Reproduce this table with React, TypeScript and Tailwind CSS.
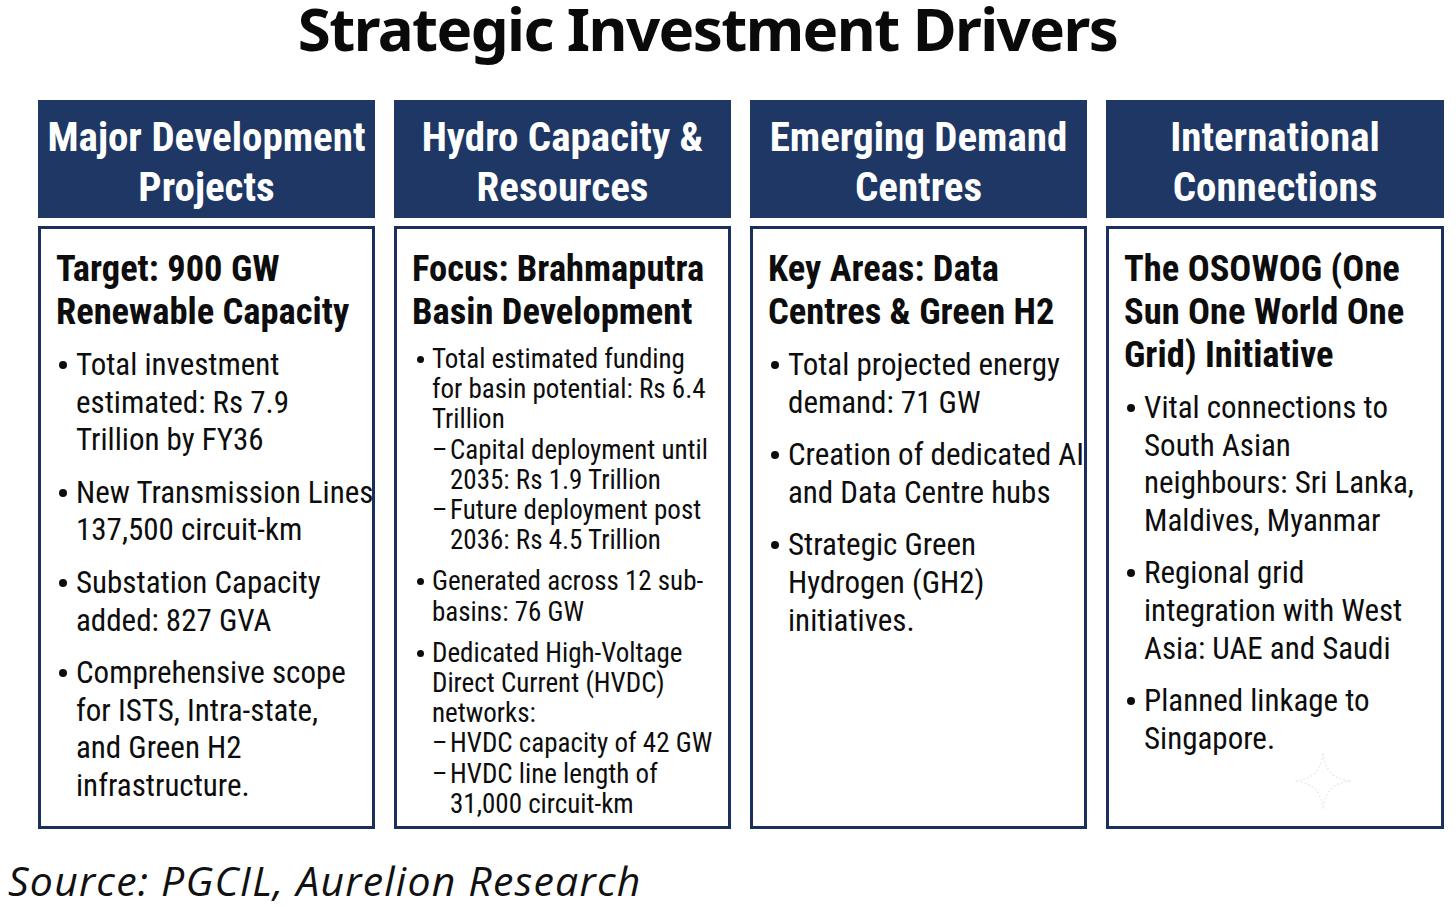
import React from "react";

type Item = { text: string[]; subs?: string[][] };
type Col = { header: string[]; title: string[]; size: "lg" | "sm"; items: Item[]; star?: boolean };

const cols: Col[] = [
  {
    header: ["Major Development", "Projects"],
    title: ["Target: 900 GW", "Renewable Capacity"],
    size: "lg",
    items: [
      { text: ["Total investment", "estimated: Rs 7.9", "Trillion by FY36"] },
      { text: ["New Transmission Lines", "137,500 circuit-km"] },
      { text: ["Substation Capacity", "added: 827 GVA"] },
      { text: ["Comprehensive scope", "for ISTS, Intra-state,", "and Green H2", "infrastructure."] },
    ],
  },
  {
    header: ["Hydro Capacity &", "Resources"],
    title: ["Focus: Brahmaputra", "Basin Development"],
    size: "sm",
    items: [
      {
        text: ["Total estimated funding", "for basin potential: Rs 6.4", "Trillion"],
        subs: [
          ["Capital deployment until", "2035: Rs 1.9 Trillion"],
          ["Future deployment post", "2036: Rs 4.5 Trillion"],
        ],
      },
      { text: ["Generated across 12 sub-", "basins: 76 GW"] },
      {
        text: ["Dedicated High-Voltage", "Direct Current (HVDC)", "networks:"],
        subs: [["HVDC capacity of 42 GW"], ["HVDC line length of", "31,000 circuit-km"]],
      },
    ],
  },
  {
    header: ["Emerging Demand", "Centres"],
    title: ["Key Areas: Data", "Centres & Green H2"],
    size: "lg",
    items: [
      { text: ["Total projected energy", "demand: 71 GW"] },
      { text: ["Creation of dedicated AI", "and Data Centre hubs"] },
      { text: ["Strategic Green", "Hydrogen (GH2)", "initiatives."] },
    ],
  },
  {
    header: ["International", "Connections"],
    title: ["The OSOWOG (One", "Sun One World One", "Grid) Initiative"],
    size: "lg",
    star: true,
    items: [
      { text: ["Vital connections to", "South Asian", "neighbours: Sri Lanka,", "Maldives, Myanmar"] },
      { text: ["Regional grid", "integration with West", "Asia: UAE and Saudi"] },
      { text: ["Planned linkage to", "Singapore."] },
    ],
  },
];

function Lines({ lines }: { lines: string[] }) {
  return (
    <>
      {lines.map((l, i) => (
        <div key={i} className="whitespace-nowrap">
          {l}
        </div>
      ))}
    </>
  );
}

function Column({ col }: { col: Col }) {
  const lg = col.size === "lg";
  return (
    <div className="flex flex-col">
      <div className="h-[118px] bg-[#1e3765] flex flex-col items-center justify-center pt-[6px] text-white font-bold text-[41px] leading-[50px]">
        {col.header.map((h, i) => (
          <div key={i} className="whitespace-nowrap">
            {h}
          </div>
        ))}
      </div>
      <div className="relative mt-[8px] h-[603px] border-[3px] border-[#1b2f5c] bg-white pl-[15px] pt-[18px] text-[#0d0d0d]">
        <div className="font-bold text-[36.5px] leading-[43px]">
          <Lines lines={col.title} />
        </div>
        <div
          className={
            lg
              ? "mt-[13px] flex flex-col gap-[15px] text-[31px] leading-[37.6px]"
              : "mt-[11px] flex flex-col gap-[11px] text-[27px] leading-[30.2px]"
          }
        >
          {col.items.map((it, i) => (
            <div key={i} className="flex flex-col">
              <div className="flex">
                <div className={lg ? "w-[20px] shrink-0 pl-[3px] flex items-center h-[38px]" : "w-[20px] shrink-0 pl-[5px] flex items-center h-[31px]"}>
                  <span className={lg ? "block w-[8px] h-[8px] rounded-full bg-[#0d0d0d]" : "block w-[7px] h-[7px] rounded-full bg-[#0d0d0d]"} />
                </div>
                <div>
                  <Lines lines={it.text} />
                </div>
              </div>
              {it.subs?.map((s, j) => (
                <div key={j} className="flex pl-[20px]">
                  <div className="w-[18px] shrink-0">–</div>
                  <div>
                    <Lines lines={s} />
                  </div>
                </div>
              ))}
            </div>
          ))}
        </div>
        {col.star && (
          <svg
            className="absolute left-[184px] top-[522px] w-[60px] h-[60px]"
            viewBox="0 0 60 60"
            fill="none"
          >
            <path
              d="M30 2 C32 20 40 28 58 30 C40 32 32 40 30 58 C28 40 20 32 2 30 C20 28 28 20 30 2 Z"
              stroke="#ececec"
              strokeWidth="1.5"
              strokeDasharray="2 2"
            />
          </svg>
        )}
      </div>
    </div>
  );
}

export default function App() {
  return (
    <div className="w-[1456px] h-[907px] bg-white font-['Roboto_Condensed','DejaVu_Sans_Condensed',Roboto,sans-serif]">
      <div className="flex justify-center pr-[41px]">
        <h1 className="font-['Noto_Sans',sans-serif] font-bold text-[60px] leading-[56px] text-[#0a0a0a] tracking-[-1.6px] whitespace-nowrap">
          Strategic Investment Drivers
        </h1>
      </div>
      <div className="mt-[44px] pl-[38px] grid grid-cols-[337px_337px_337px_338px] gap-x-[19px]">
        {cols.map((c, i) => (
          <Column key={i} col={c} />
        ))}
      </div>
      <div className="pl-[8px] mt-[31px] font-['Open_Sans',sans-serif] italic text-[41px] leading-[41px] tracking-[1.2px] text-[#111111] whitespace-nowrap">
        Source: PGCIL, Aurelion Research
      </div>
    </div>
  );
}
